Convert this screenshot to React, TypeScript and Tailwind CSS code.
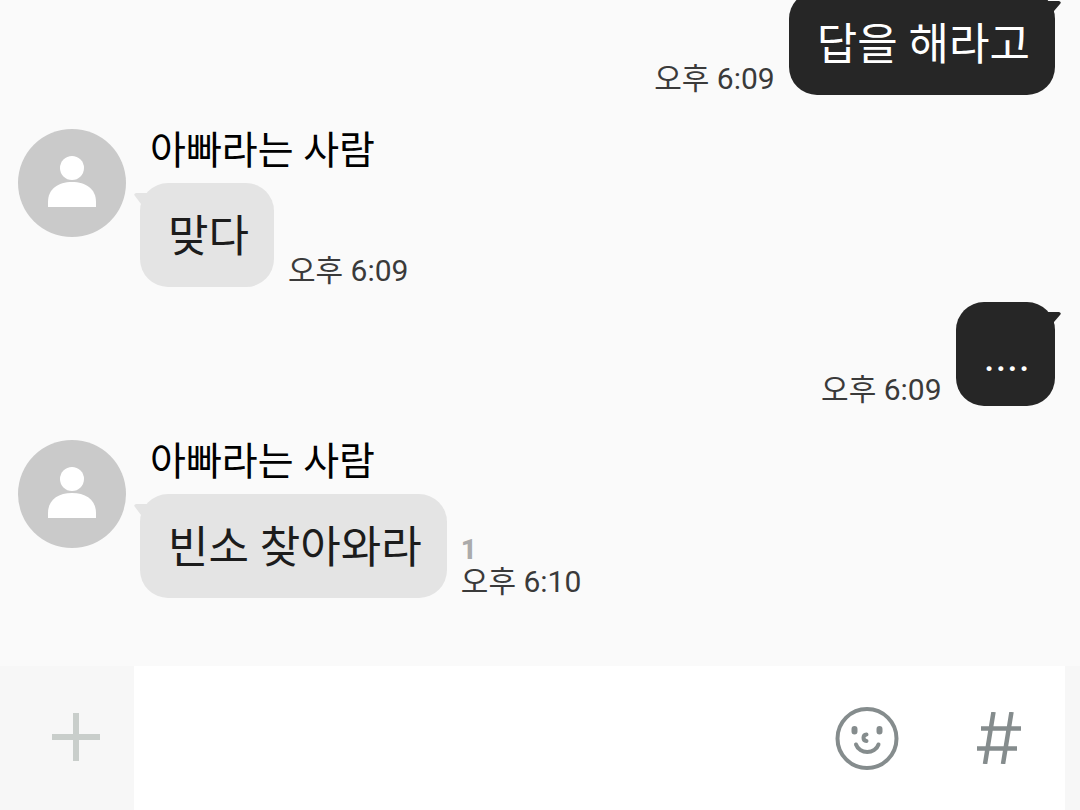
import type { ReactNode } from 'react';

type Message = {
  id: number;
  mine: boolean;
  text: string;
  time: string;
  unread?: number;
};

const SENDER = '아빠라는 사람';

const messages: Message[] = [
  { id: 1, mine: true, text: '답을 해라고', time: '오후 6:09' },
  { id: 2, mine: false, text: '맞다', time: '오후 6:09' },
  { id: 3, mine: true, text: '....', time: '오후 6:09' },
  { id: 4, mine: false, text: '빈소 찾아와라', time: '오후 6:10', unread: 1 },
];

const Avatar = () => (
  <svg className="h-[108px] w-[108px] shrink-0" viewBox="0 0 108 108" aria-hidden="true">
    <circle cx="54" cy="54" r="54" fill="#cacaca" />
    <circle cx="54" cy="39" r="12" fill="#fff" />
    <path d="M30 78V73C30 60 40 53 54 53S78 60 78 73V78Z" fill="#fff" />
  </svg>
);

const Bubble = ({ mine, children }: { mine: boolean; children: ReactNode }) => (
  <div
    className={
      mine
        ? 'relative rounded-[28px] bg-[#262626] pt-6 pr-[25px] pb-5 pl-7 text-[44px] leading-[60px] text-white'
        : 'relative rounded-[28px] bg-[#e4e4e4] pt-6 pr-[25px] pb-5 pl-7 text-[44px] leading-[60px] text-[#1c1c1c]'
    }
  >
    {/* Tail */}
    {mine ? (
      <svg className="absolute -right-1.5 top-2.5 h-4 w-6" viewBox="0 0 24 16" aria-hidden="true">
        <path d="M4 0H22Q25 1 23 3L17 10V16H4Z" fill="#262626" />
      </svg>
    ) : (
      <svg className="absolute -left-1.5 top-2.5 h-4 w-6" viewBox="0 0 24 16" aria-hidden="true">
        <path d="M20 0H2Q-1 1 1 3L7 11V16H20Z" fill="#e4e4e4" />
      </svg>
    )}
    <p className="whitespace-nowrap">{children}</p>
  </div>
);

const Meta = ({ time, unread }: { time: string; unread?: number }) => (
  <div className="flex flex-col whitespace-nowrap text-[30px] leading-8 text-[#3a3a3a]">
    {unread && (
      <span className="text-[28px] font-extrabold text-[#ababab]">{unread}</span>
    )}
    <time>{time}</time>
  </div>
);

const MyMessage = ({ message }: { message: Message }) => (
  <li className="flex items-end justify-end gap-3.5 pr-[25px]">
    <Meta time={message.time} unread={message.unread} />
    <Bubble mine>{message.text}</Bubble>
  </li>
);

const TheirMessage = ({ message }: { message: Message }) => (
  <li className="flex items-start gap-3.5 pt-[19px] pl-[18px]">
    <Avatar />
    <div>
      <p className="mb-2.5 pl-2.5 text-[39px] leading-[44px] text-black">{SENDER}</p>
      <div className="flex items-end gap-3.5">
        <Bubble mine={false}>{message.text}</Bubble>
        <Meta time={message.time} unread={message.unread} />
      </div>
    </div>
  </li>
);

const Composer = () => (
  <form className="flex h-36 shrink-0 bg-[#f7f7f7]" onSubmit={(e) => e.preventDefault()}>
    <button type="button" aria-label="첨부" className="flex w-[134px] shrink-0 items-center justify-center pb-0.5 pl-[18px]">
      <svg className="h-12 w-12" viewBox="0 0 48 48" aria-hidden="true">
        <path d="M21 0H27V21H48V27H27V48H21V27H0V21H21Z" fill="#c9cecb" />
      </svg>
    </button>
    <div className="mr-[15px] flex min-w-0 flex-1 items-center bg-white pr-[42px]">
      <input
        type="text"
        aria-label="메시지 입력"
        className="h-full min-w-0 flex-1 bg-transparent px-6 text-[44px] text-[#1c1c1c] outline-none"
      />
      <button type="button" aria-label="이모티콘" className="mr-[76px] shrink-0">
        <svg className="h-16 w-16" viewBox="0 0 64 64" fill="none" stroke="#858c8d" strokeLinecap="round" aria-hidden="true">
          <circle cx="32" cy="32.500" r="29.500" strokeWidth="4" />
          <path d="M19.500 23V25.500M44.500 23V25.500" strokeWidth="6" />
          <path d="M31.500 28.500C27.500 29 27.500 34.500 31.500 35" strokeWidth="4" />
          <path d="M21 38.500C24.500 48.500 40 48.500 43.500 38.500" strokeWidth="4" />
        </svg>
      </button>
      <button type="button" aria-label="샵검색" className="shrink-0">
        <svg className="h-[52px] w-12" viewBox="0 0 48 52" fill="none" stroke="#858c8d" strokeWidth="4.500" aria-hidden="true">
          <path d="M18.500 0L10 52M36.500 0L28 52M6 16.500H46M2 36.500H42" />
        </svg>
      </button>
    </div>
  </form>
);

export default function App() {
  return (
    <main className="flex h-screen flex-col overflow-hidden bg-[#fafafa] font-[Roboto,'Noto_Sans_CJK_KR',sans-serif]">
      <ul className="flex min-h-0 flex-1 flex-col justify-end gap-[15px] overflow-hidden pb-[68px]">
        {messages.map((message) =>
          message.mine ? (
            <MyMessage key={message.id} message={message} />
          ) : (
            <TheirMessage key={message.id} message={message} />
          ),
        )}
      </ul>
      <Composer />
    </main>
  );
}
